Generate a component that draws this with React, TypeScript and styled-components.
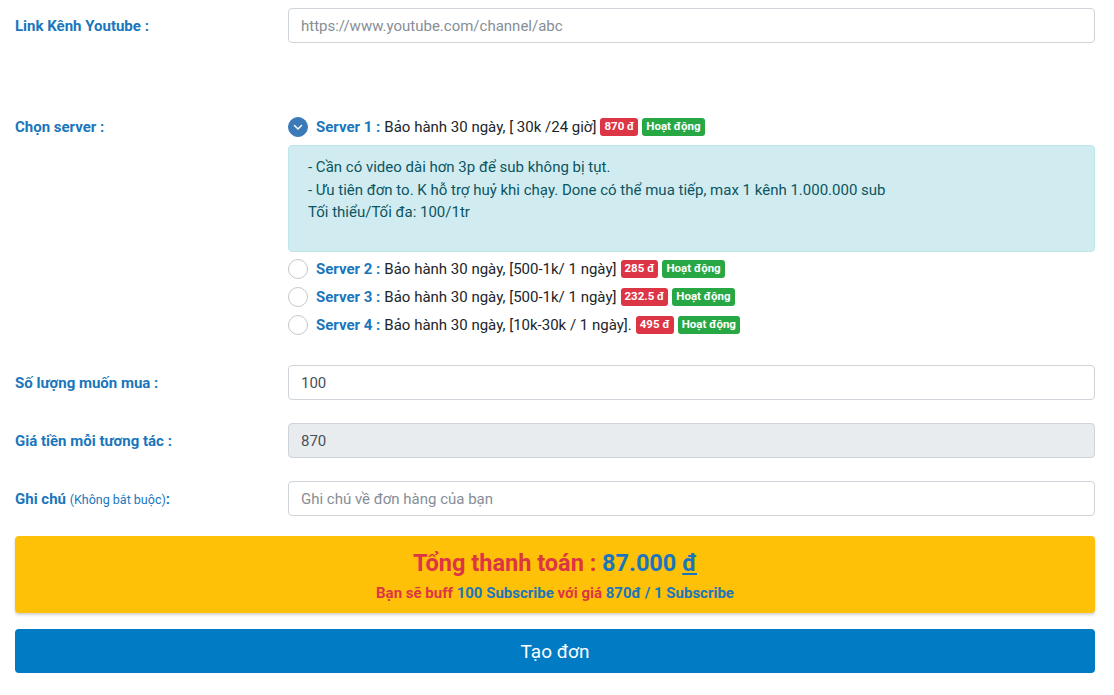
import styled, { createGlobalStyle } from "styled-components";

const GlobalStyle = createGlobalStyle`
  body {
    margin: 0;
    background: #fff;
    font-family: Roboto, "Noto Sans", "Liberation Sans", sans-serif;
    font-size: 15px;
    color: #212529;
  }
  * { box-sizing: border-box; }
`;

const Page = styled.div`
  padding: 8px 19px 0 15px;
`;

const FormRow = styled.div<{ $mb?: number }>`
  display: grid;
  grid-template-columns: 273px 1fr;
  align-items: center;
  margin-bottom: ${(p) => p.$mb ?? 23}px;
`;

const TopRow = styled(FormRow)`
  align-items: start;
`;

const Label = styled.label`
  color: #1a76bc;
  font-weight: 700;
  font-size: 15px;
`;

const TopLabel = styled(Label)`
  padding-top: 5px;
`;

const Small = styled.span`
  font-weight: 400;
  font-size: 12.5px;
`;

const Input = styled.input<{ $disabled?: boolean }>`
  width: 100%;
  height: 35px;
  padding: 0 12px;
  border: 1px solid #ced4da;
  border-radius: 4px;
  font-family: inherit;
  font-size: 15px;
  color: #495057;
  background: ${(p) => (p.$disabled ? "#e9ecef" : "#fff")};
  outline: none;
  &::placeholder {
    color: #868e96;
  }
`;

const ServerList = styled.div`
  display: flex;
  flex-direction: column;
`;

const ServerRow = styled.div`
  display: flex;
  align-items: center;
  height: 28px;
`;

const Radio = styled.span<{ $checked?: boolean }>`
  width: 20px;
  height: 20px;
  border-radius: 50%;
  flex: none;
  margin-right: 8px;
  display: flex;
  align-items: center;
  justify-content: center;
  background: ${(p) => (p.$checked ? "#3b7ab9" : "#fff")};
  border: 1px solid ${(p) => (p.$checked ? "#3b7ab9" : "#c4c8cc")};
`;

const ServerName = styled.span`
  color: #1a76bc;
  font-weight: 700;
  margin-right: 4px;
`;

const Badge = styled.span<{ $color: string }>`
  display: inline-block;
  background: ${(p) => p.$color};
  color: #fff;
  font-size: 11.5px;
  font-weight: 700;
  line-height: 1;
  padding: 3px 4px;
  border-radius: 3px;
  margin-left: 4px;
`;

const Note = styled.div`
  background: #d1ecf1;
  border: 1px solid #bee5eb;
  border-radius: 4px;
  color: #0c5460;
  line-height: 22.5px;
  padding: 10px 19px 28px;
  margin: 4px 0 3px;
  height: 107px;
`;

const Total = styled.div`
  background: #ffc107;
  border-radius: 4px;
  box-shadow: 0 2px 3px rgba(0, 0, 0, 0.18);
  height: 77px;
  display: flex;
  flex-direction: column;
  align-items: center;
  justify-content: center;
  margin-top: 20px;
`;

const TotalTitle = styled.div`
  font-size: 23.5px;
  font-weight: 700;
  color: #dc3545;
  line-height: 30px;
`;

const Blue = styled.span`
  color: #1a76bc;
`;

const Currency = styled.span`
  text-decoration: underline;
`;

const TotalSub = styled.div`
  font-size: 15px;
  font-weight: 700;
  color: #dc3545;
  margin-top: 6px;
`;

const SubmitButton = styled.button`
  display: block;
  width: 100%;
  height: 44px;
  margin-top: 16px;
  border: none;
  border-radius: 4px;
  background: #007bc4;
  color: #fff;
  font-family: inherit;
  font-size: 19px;
`;

const servers = [
  { name: "Server 1", desc: "Bảo hành 30 ngày, [ 30k /24 giờ]", price: "870 đ", checked: true },
  { name: "Server 2", desc: "Bảo hành 30 ngày, [500-1k/ 1 ngày]", price: "285 đ" },
  { name: "Server 3", desc: "Bảo hành 30 ngày, [500-1k/ 1 ngày]", price: "232.5 đ" },
  { name: "Server 4", desc: "Bảo hành 30 ngày, [10k-30k / 1 ngày].", price: "495 đ" },
];

function ServerOption({ s }: { s: (typeof servers)[number] }) {
  return (
    <ServerRow>
      <Radio $checked={s.checked}>
        {s.checked && (
          <svg width="12" height="12" viewBox="0 0 12 12">
            <path d="M2.5 4.5 L6 8 L9.5 4.5" fill="none" stroke="#fff" strokeWidth="1.5" strokeLinecap="round" strokeLinejoin="round" />
          </svg>
        )}
      </Radio>
      <ServerName>{s.name} :</ServerName>
      {s.desc}
      <Badge $color="#dc3545">{s.price}</Badge>
      <Badge $color="#28a745">Hoạt động</Badge>
    </ServerRow>
  );
}

export default function App() {
  return (
    <Page>
      <GlobalStyle />
      <FormRow $mb={70}>
        <Label>Link Kênh Youtube :</Label>
        <Input placeholder="https://www.youtube.com/channel/abc" />
      </FormRow>
      <TopRow $mb={26}>
        <TopLabel>Chọn server :</TopLabel>
        <ServerList>
          <ServerOption s={servers[0]} />
          <Note>
            - Cần có video dài hơn 3p để sub không bị tụt.
            <br />- Ưu tiên đơn to. K hỗ trợ huỷ khi chạy. Done có thể mua tiếp, max 1 kênh 1.000.000 sub
            <br />Tối thiểu/Tối đa: 100/1tr
          </Note>
          {servers.slice(1).map((s) => (
            <ServerOption key={s.name} s={s} />
          ))}
        </ServerList>
      </TopRow>
      <FormRow>
        <Label>Số lượng muốn mua :</Label>
        <Input defaultValue="100" />
      </FormRow>
      <FormRow>
        <Label>Giá tiền mỗi tương tác :</Label>
        <Input $disabled readOnly defaultValue="870" />
      </FormRow>
      <FormRow $mb={0}>
        <Label>
          Ghi chú <Small>(Không bắt buộc)</Small>:
        </Label>
        <Input placeholder="Ghi chú về đơn hàng của bạn" />
      </FormRow>
      <Total>
        <TotalTitle>
          Tổng thanh toán : <Blue>87.000 <Currency>đ</Currency></Blue>
        </TotalTitle>
        <TotalSub>
          Bạn sẽ buff <Blue>100 Subscribe</Blue> với giá <Blue>870đ / 1 Subscribe</Blue>
        </TotalSub>
      </Total>
      <SubmitButton>Tạo đơn</SubmitButton>
    </Page>
  );
}
